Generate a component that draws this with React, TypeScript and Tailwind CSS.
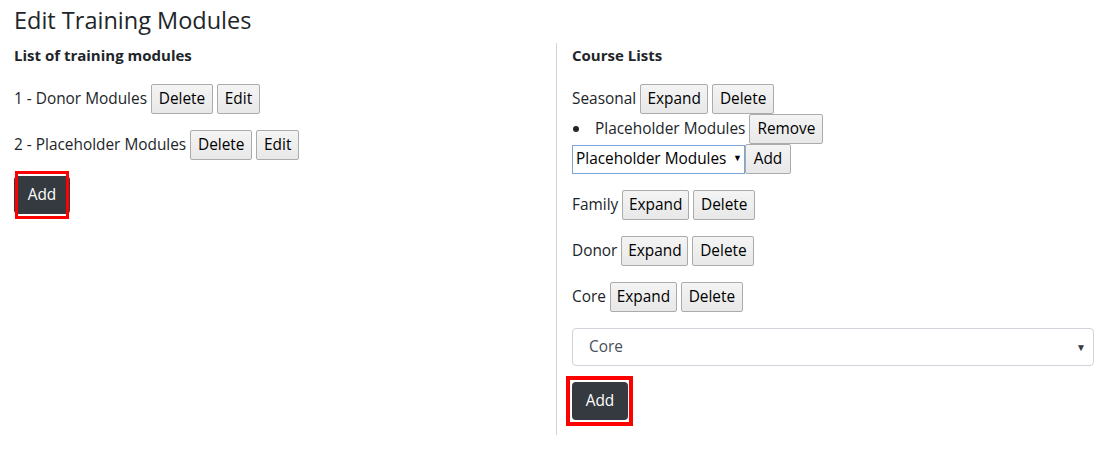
import React from "react";

const font = { fontFamily: '"Segoe UI", "Open Sans", "Noto Sans", sans-serif' };

function Btn({ label, w }: { label: string; w: string }) {
  return (
    <button
      type="button"
      className={`${w} h-[30px] shrink-0 rounded-[2px] border border-[#ababab] bg-gradient-to-b from-[#f4f4f4] to-[#e8e8e8] text-[15.4px] leading-none text-black`}
    >
      {label}
    </button>
  );
}

function DarkAdd({ ring }: { ring: string }) {
  return (
    <div className="relative w-[56px]">
      <button
        type="button"
        className="h-[38px] w-[56px] rounded-[4px] bg-[#343a40] text-[15.4px] text-white"
      >
        Add
      </button>
      <div className={`pointer-events-none absolute border-[#ff0000] ${ring}`} />
    </div>
  );
}

function Course({ name }: { name: string }) {
  return (
    <div className="mb-4 flex h-[30px] items-center gap-[4px]">
      <span>{name}</span>
      <Btn label="Expand" w="w-[67px]" />
      <Btn label="Delete" w="w-[62px]" />
    </div>
  );
}

export default function App() {
  return (
    <div className="min-h-screen bg-white px-[14px] pt-[6px] text-[15.4px] text-[#212529]" style={font}>
      <h1 className="mb-[9px] text-[23.5px] leading-[28px]">Edit Training Modules</h1>
      <div className="flex">
        <div className="w-[542px] shrink-0">
          <h6 className="mb-4 text-[15px] font-bold leading-[25px]">List of training modules</h6>
          <div className="mb-4 flex h-[30px] items-center gap-[4px]">
            <span>1 - Donor Modules</span>
            <Btn label="Delete" w="w-[62px]" />
            <Btn label="Edit" w="w-[43px]" />
          </div>
          <div className="mb-4 flex h-[30px] items-center gap-[4px]">
            <span>2 - Placeholder Modules</span>
            <Btn label="Delete" w="w-[62px]" />
            <Btn label="Edit" w="w-[43px]" />
          </div>
          <DarkAdd ring="-top-[5px] left-[1px] h-[48px] w-[54px] border-[3px]" />
        </div>

        <div className="flex-1 border-l border-[#d3d3d3] pb-[15px] pl-[15px] pr-[5px]">
          <h6 className="mb-4 text-[15px] font-bold leading-[25px]">Course Lists</h6>

          <div className="flex h-[30px] items-center gap-[4px]">
            <span>Seasonal</span>
            <Btn label="Expand" w="w-[68px]" />
            <Btn label="Delete" w="w-[62px]" />
          </div>
          <ul>
            <li className="flex h-[30px] items-center">
              <span className="flex w-[23px] items-center">
                <span className="ml-[1px] h-[6px] w-[6px] rounded-full bg-[#212529]" />
              </span>
              <span className="mr-[4px]">Placeholder Modules</span>
              <Btn label="Remove" w="w-[74px]" />
            </li>
          </ul>
          <div className="mb-4 flex h-[30px] items-center">
            <div className="relative">
              <select className="h-[29px] w-[173px] appearance-none border border-[#7ba3dc] bg-white pl-[3px] text-[15.4px] text-black outline-none">
                <option>Placeholder Modules</option>
              </select>
              <span className="pointer-events-none absolute right-[3px] top-[6px] text-[9px] text-black">▼</span>
            </div>
            <Btn label="Add" w="w-[46px]" />
          </div>

          <Course name="Family" />
          <Course name="Donor" />
          <Course name="Core" />

          <div className="relative mb-4">
            <select className="h-[38px] w-full appearance-none rounded-[4px] border border-[#ced4da] bg-white pl-[16px] text-[15.4px] text-[#495057] outline-none">
              <option>Core</option>
            </select>
            <span className="pointer-events-none absolute right-[8px] top-[12px] text-[10px] text-[#343a40]">▼</span>
          </div>

          <DarkAdd ring="-left-[6px] -top-[6px] h-[50px] w-[67px] border-[4px]" />
        </div>
      </div>
    </div>
  );
}
